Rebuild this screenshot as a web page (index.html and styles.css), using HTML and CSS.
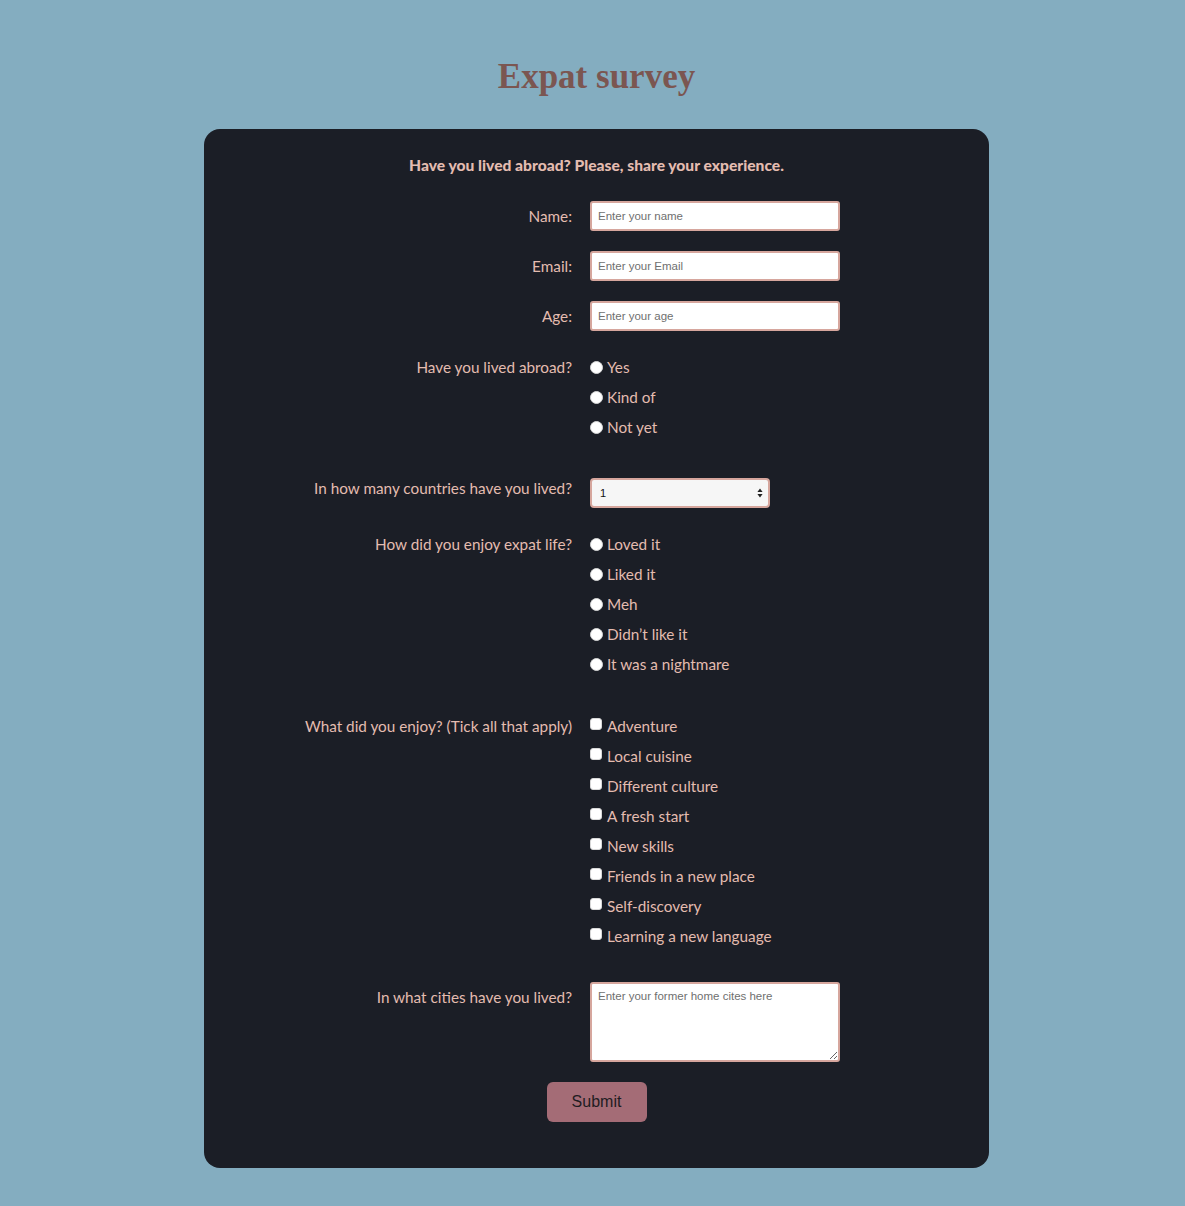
FILE: index.html
```html
<!DOCTYPE html>
<html lang="en">
<head>
<meta charset="utf-8">
<title>Expat survey</title>
<link rel="stylesheet" href="styles.css">
</head>
<body>
<h1 class="title">Expat survey</h1>
<form class="card">
  <p class="intro">Have you lived abroad? Please, share your experience.</p>

  <div class="row row-name">
    <label class="label" for="name">Name:</label>
    <input class="field" id="name" type="text" placeholder="Enter your name">
  </div>
  <div class="row row-20">
    <label class="label" for="email">Email:</label>
    <input class="field" id="email" type="email" placeholder="Enter your Email">
  </div>
  <div class="row row-20">
    <label class="label" for="age">Age:</label>
    <input class="field" id="age" type="number" placeholder="Enter your age">
  </div>

  <div class="row row-21">
    <span class="label">Have you lived abroad?</span>
    <div class="options">
      <label class="option"><input class="radio" type="radio" name="abroad">Yes</label>
      <label class="option"><input class="radio" type="radio" name="abroad">Kind of</label>
      <label class="option"><input class="radio" type="radio" name="abroad">Not yet</label>
    </div>
  </div>

  <div class="row row-31">
    <label class="label" for="countries">In how many countries have you lived?</label>
    <div class="select-wrap">
      <select class="select" id="countries">
        <option>1</option><option>2</option><option>3</option><option>4</option><option>5+</option>
      </select>
      <svg class="select-arrows" width="6" height="10" viewBox="0 0 6 10"><path d="M3 0.5 L5.6 4 H0.4 Z M3 9.5 L5.6 6 H0.4 Z" fill="#222"/></svg>
    </div>
  </div>

  <div class="row row-21">
    <span class="label">How did you enjoy expat life?</span>
    <div class="options">
      <label class="option"><input class="radio" type="radio" name="enjoy">Loved it</label>
      <label class="option"><input class="radio" type="radio" name="enjoy">Liked it</label>
      <label class="option"><input class="radio" type="radio" name="enjoy">Meh</label>
      <label class="option"><input class="radio" type="radio" name="enjoy">Didn’t like it</label>
      <label class="option"><input class="radio" type="radio" name="enjoy">It was a nightmare</label>
    </div>
  </div>

  <div class="row row-32">
    <span class="label">What did you enjoy? (Tick all that apply)</span>
    <div class="options">
      <label class="option"><input class="check" type="checkbox">Adventure</label>
      <label class="option"><input class="check" type="checkbox">Local cuisine</label>
      <label class="option"><input class="check" type="checkbox">Different culture</label>
      <label class="option"><input class="check" type="checkbox">A fresh start</label>
      <label class="option"><input class="check" type="checkbox">New skills</label>
      <label class="option"><input class="check" type="checkbox">Friends in a new place</label>
      <label class="option"><input class="check" type="checkbox">Self-discovery</label>
      <label class="option"><input class="check" type="checkbox">Learning a new language</label>
    </div>
  </div>

  <div class="row row-31">
    <label class="label" for="cities">In what cities have you lived?</label>
    <textarea class="field area" id="cities" placeholder="Enter your former home cites here"></textarea>
  </div>

  <div class="actions">
    <button class="submit" type="submit">Submit</button>
  </div>
</form>
</body>
</html>
```

FILE: styles.css
```css
html, body {
  margin: 0;
  padding: 0;
}

body {
  background: #84adc0;
  padding: 0 0 38px 8px;
  font-family: "Lato", "Liberation Sans", sans-serif;
}

.title {
  margin: 57px 0 32px;
  font-family: "Liberation Serif", serif;
  font-weight: bold;
  font-size: 35px;
  line-height: 40px;
  text-align: center;
  color: #7b5651;
}

.card {
  box-sizing: border-box;
  width: 785px;
  margin: 0 auto;
  background: #1b1e26;
  border-radius: 16px;
  padding: 26px 0 46px;
  color: #e4bcb0;
  font-size: 15.3px;
}

.intro {
  margin: 0;
  line-height: 20px;
  font-weight: 900;
  font-size: 15.6px;
  text-align: center;
}

.row {
  display: grid;
  grid-template-columns: 368px 1fr;
  column-gap: 18px;
  align-items: start;
}

.row-name { margin-top: 26px; }
.row-20 { margin-top: 20px; }
.row-21 { margin-top: 21px; }
.row-31 { margin-top: 31px; }
.row-32 { margin-top: 32px; }

.label {
  text-align: right;
  line-height: 30px;
}

.field {
  box-sizing: border-box;
  display: block;
  width: 250px;
  height: 30px;
  margin: 0;
  padding: 0 6px;
  border: 2px solid #d6a69d;
  border-radius: 3px;
  background: #fff;
  font-family: "Liberation Sans", Arial, sans-serif;
  font-size: 11.5px;
  color: #222;
  outline: none;
}

.field::placeholder {
  color: #6f6f6f;
}

.field[type="number"] {
  -moz-appearance: textfield;
}
.field[type="number"]::-webkit-inner-spin-button,
.field[type="number"]::-webkit-outer-spin-button {
  -webkit-appearance: none;
  margin: 0;
}

.area {
  height: 80px;
  padding: 6px 6px;
  resize: vertical;
}

.options {
  display: flex;
  flex-direction: column;
}

.option {
  display: flex;
  align-items: center;
  height: 30px;
  line-height: 30px;
}

.radio {
  -webkit-appearance: none;
  appearance: none;
  box-sizing: border-box;
  width: 13px;
  height: 13px;
  margin: 0 4px 0 0;
  border-radius: 50%;
  background: #fff;
  border: 1px solid #d8d8d8;
  flex: none;
}

.check {
  -webkit-appearance: none;
  appearance: none;
  box-sizing: border-box;
  width: 12px;
  height: 12px;
  margin: 0 5px 4px 0;
  border-radius: 3px;
  background: #fff;
  border: 1px solid #d8d8d8;
  flex: none;
}

.select-wrap {
  position: relative;
  width: 180px;
  margin-top: 5px;
}

.select {
  -webkit-appearance: none;
  appearance: none;
  box-sizing: border-box;
  display: block;
  width: 180px;
  height: 30px;
  margin: 0;
  padding: 0 8px;
  border: 2px solid #d6a69d;
  border-radius: 4px;
  background: #f6f6f6;
  font-family: "Liberation Sans", Arial, sans-serif;
  font-size: 11px;
  color: #111;
  outline: none;
}

.select-arrows {
  position: absolute;
  right: 7px;
  top: 10px;
  pointer-events: none;
}

.actions {
  display: flex;
  justify-content: center;
  margin-top: 20px;
}

.submit {
  width: 100px;
  height: 40px;
  border: none;
  border-radius: 6px;
  background: #a46c76;
  color: #1f1c22;
  font-family: "Liberation Sans", Arial, sans-serif;
  font-size: 16px;
  cursor: pointer;
}
```
